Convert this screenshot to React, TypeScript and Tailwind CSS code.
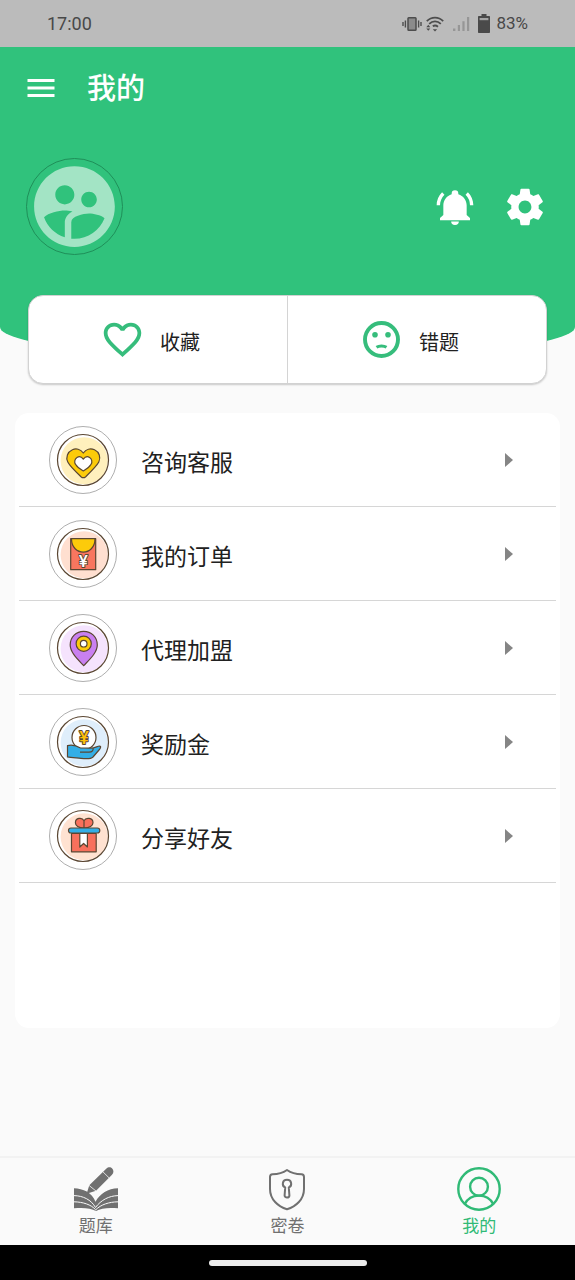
import type { ReactNode } from "react";
import { MdFavoriteBorder, MdMenu, MdSupervisedUserCircle } from "react-icons/md";

const OUTLINE = "#5a4632";

function StatusBar() {
  return (
    <div className="flex h-[47px] items-center justify-between bg-[#bbbbbb] px-[47px] font-['Roboto',sans-serif] text-[#484848]">
      <span className="text-lg">17:00</span>
      <div className="flex items-center text-[17px]">
        <svg viewBox="0 0 20 16" className="h-4 w-5" fill="none" stroke="#4d4d4d" aria-hidden="true">
          <rect x="6" y="1.7" width="8" height="12.6" rx="0.8" fill="#8b8b8b" strokeWidth="1.5" />
          <path d="M3.4 4.5v7M16.6 4.5v7" strokeWidth="1.4" />
          <path d="M1 6v4M19 6v4" strokeWidth="1.4" />
        </svg>
        <svg viewBox="0 0 18 16" className="ml-1 h-4 w-[18px]" fill="none" stroke="#4d4d4d" strokeWidth="1.8" aria-hidden="true">
          <path d="M0.8 5.2C5.5 0.4 12.5 0.4 17.2 5.2" />
          <path d="M3.2 7.9C6.6 4.6 11.4 4.6 14.8 7.9" />
          <path d="M6.8 10.2C8.3 9.2 10.3 9.3 12 10.7" />
          <path d="M9 15.6l-2.2-2.4h4.4z" fill="#4d4d4d" stroke="none" />
          <path d="M2.3 8.8l2 2.4h-4zM2.3 14.8l2-2.4h-4z" fill="#4d4d4d" stroke="none" />
        </svg>
        <svg viewBox="0 0 17 16" className="ml-[9px] h-4 w-[17px]" fill="#969696" aria-hidden="true">
          <path d="M0 12.5h2.4V15H0zM4.8 9h2.2v6H4.8zM9.4 5.2h2.2V15H9.4zM14 1h2.2v14H14z" />
        </svg>
        <svg viewBox="0 0 12 19" className="ml-[8px] h-[19px] w-3" fill="#4a4a4a" aria-hidden="true">
          <path d="M3.5 0h5v2H11c.6 0 1 .4 1 1v15c0 .6-.4 1-1 1H1c-.6 0-1-.4-1-1V3c0-.6.4-1 1-1h2.5z" />
          <path d="M1.6 4h8.8v2.2H1.6z" fill="#a5a5a5" />
        </svg>
        <span className="ml-[6px]">83%</span>
      </div>
    </div>
  );
}

function BellIcon() {
  return (
    <svg viewBox="0 0 24 24" className="size-10" fill="currentColor" aria-hidden="true">
      <path d="M21 18.6v1.400H3v-1.400l2-1.800V11c0-3.100 2.030-5.830 5-6.710V4a2 2 0 0 1 4 0v.29c2.970.88 5 3.610 5 6.710v5.800zM14.300 20.700a2.300 2.100 0 0 1-4.600 0zM19.750 3.190l-1.420 1.420A8.980 8.980 0 0 1 21 11h2c0-2.930-1.160-5.750-3.250-7.810M1 11h2c0-2.400.96-4.700 2.670-6.390L4.250 3.190A10.960 10.960 0 0 0 1 11z" />
    </svg>
  );
}

function GearIcon() {
  return (
    <svg viewBox="0 0 24 24" className="size-11" fill="currentColor" aria-hidden="true">
      <path d="M19.43 12.98c.04-.32.07-.64.07-.98s-.03-.66-.07-.98l2.11-1.65c.19-.15.24-.42.12-.64l-2-3.46c-.12-.22-.39-.3-.61-.22l-2.49 1c-.52-.4-1.08-.73-1.69-.98l-.38-2.65C14.46 2.18 14.25 2 14 2h-4c-.25 0-.46.18-.49.42l-.38 2.65c-.61.25-1.17.59-1.69.98l-2.49-1c-.23-.09-.49 0-.61.22l-2 3.46c-.13.22-.07.49.12.64l2.11 1.65c-.04.32-.07.65-.07.98s.03.66.07.98l-2.11 1.65c-.19.15-.24.42-.12.64l2 3.46c.12.22.39.3.61.22l2.49-1c.52.4 1.08.73 1.69.98l.38 2.65c.03.24.24.42.49.42h4c.25 0 .46-.18.49-.42l.38-2.65c.61-.25 1.17-.59 1.69-.98l2.49 1c.23.09.49 0 .61-.22l2-3.46c.12-.22.07-.49-.12-.64l-2.11-1.65zM12 15.5c-1.93 0-3.5-1.57-3.5-3.5s1.57-3.5 3.5-3.5 3.5 1.57 3.5 3.5-1.57 3.5-3.5 3.5z" />
    </svg>
  );
}

function FaceIcon() {
  return (
    <svg viewBox="0 0 45 45" className="size-[45px]" fill="none" stroke="currentColor" aria-hidden="true">
      <circle cx="22.5" cy="22.5" r="16.5" strokeWidth="3.9" />
      <circle cx="16" cy="17.8" r="2.8" fill="currentColor" stroke="none" />
      <circle cx="29" cy="17.8" r="2.8" fill="currentColor" stroke="none" />
      <path d="M17.5 30.200C20 28.500 25 28.500 27.500 30.200" strokeWidth="3" />
    </svg>
  );
}

function Badge({ tint, children }: { tint: string; children: ReactNode }) {
  return (
    <svg viewBox="0 0 68 68" className="size-[68px] shrink-0" fill="none" aria-hidden="true">
      <circle cx="34" cy="34" r="33.5" stroke="#777" strokeWidth="0.6" fill="#fff" />
      <circle cx="35.2" cy="34.8" r="23.6" fill={tint} />
      <circle cx="34" cy="34" r="25.5" stroke={OUTLINE} strokeWidth="1.2" />
      <g stroke={OUTLINE} strokeWidth="1.2" strokeLinejoin="round">
        {children}
      </g>
    </svg>
  );
}

const ITEMS: { label: string; tint: string; art: ReactNode }[] = [
  {
    label: "咨询客服",
    tint: "#fff0bd",
    art: (
      <>
        <path d="M34.3 27C31.5 23 27 22 23.4 23.8C18.5 26 16.5 31.5 18.8 36C20.5 39.5 27 46 32 50.7C33.5 52 35.2 52 36.7 50.7C41.5 46 48 39.5 49.8 36C52 31.5 50.3 26 45.5 23.8C41.5 22 37 23 34.3 27Z" fill="#fccb0a" />
        <path d="M34.3 33.2C32.7 31 30 30.3 28 31.5C25.7 32.9 25 36 26.5 38.3C27.7 40.3 31.5 43.5 34.3 45C37.1 43.5 40.9 40.3 42.1 38.3C43.5 36 42.9 32.9 40.6 31.5C38.6 30.3 35.9 31 34.3 33.2Z" fill="#fff" />
      </>
    ),
  },
  {
    label: "我的订单",
    tint: "#ffdfd0",
    art: (
      <>
        <path d="M21.700 18.700h25v31h-25z" fill="#f8765f" />
        <path d="M22.500 18.700C22.500 36.500 46 36.500 46 18.700Z" fill="#fccb0a" />
        <text x="34.300" y="46.500" textAnchor="middle" fontSize="17" fontWeight="500" fontFamily="Roboto, sans-serif" fill="#fff" strokeWidth="1.800" paintOrder="stroke">¥</text>
      </>
    ),
  },
  {
    label: "代理加盟",
    tint: "#f5e3fd",
    art: (
      <>
        <path d="M34.7 51.7C29 45.5 21.2 38.5 21.2 31C21.2 23 27.2 17.3 34.7 17.3S48.3 23 48.3 31C48.3 38.5 40.5 45.5 34.7 51.7Z" fill="#c980f0" />
        <circle cx="34.7" cy="29.7" r="7.6" fill="#fccb0a" />
        <circle cx="34.7" cy="29.7" r="3.3" fill="#fff" />
      </>
    ),
  },
  {
    label: "奖励金",
    tint: "#dfeefb",
    art: (
      <>
        <circle cx="35" cy="29.5" r="12" fill="#fff" />
        <text x="35" y="36" textAnchor="middle" fontSize="18" fontWeight="500" fontFamily="Roboto, sans-serif" fill="#fcc00a" strokeWidth="1.8" paintOrder="stroke">¥</text>
        <path d="M18.5 37.7C24 36.2 28 38 31.5 40L42 40.2C45 40.3 48 38.5 50.5 38C52.5 38 51.5 40.5 50 42L44 49C42 51 36 50.8 32 50.3C27 49.8 22 49.7 18.5 48.9Z" fill="#33aee6" />
        <path d="M31 44.2H40C43.5 44.2 44.5 42 44 40.2" />
      </>
    ),
  },
  {
    label: "分享好友",
    tint: "#ffe2d1",
    art: (
      <>
        <path d="M35 26C29.5 26 26.4 23.7 26.4 20.7C26.4 15.8 33 14.9 35 18.8C37 14.9 44 15.8 44 20.7C44 23.7 40.5 26 35 26ZM35 18.8V26" fill="#f8705c" />
        <path d="M22.5 31.5h24.7v18.3H22.5z" fill="#f8705c" />
        <path d="M30.8 31.5h7.6V45l-3.8-3.5L30.8 45z" fill="#fff" />
        <rect x="19.5" y="26" width="31.3" height="5" rx="2.5" fill="#33aee6" />
      </>
    ),
  },
];

function BookIcon() {
  return (
    <svg viewBox="0 0 44 44" className="size-11" fill="currentColor" aria-hidden="true">
      <path d="M0 21.3C9 21.5 18 25.5 21.5 34.8C26 26.5 34 21.5 44 21.3V41.3C35 40.5 27 41 22 44C17 41 9 40.5 0 41.3Z" />
      <path d="M0 28.6C9 28.8 17 32.5 21.5 40.5C27 33 35 28.8 44 28.6M0 34.8C9 35 17 37.5 21.7 42.8C27 37.5 35 35 44 34.8" fill="none" stroke="#fafafa" strokeWidth="1" />
      <path d="M12.6 26.800L15.300 18.300L32.200 1.700C34.500-.5 36.800-.1 38.200 1.500C39.900 3.300 39.800 5.800 38 7.800L22 23.800Z" />
      <path d="M28.800 4.700L35 10.800M15 18.400L22.200 24.200" stroke="#fafafa" strokeWidth="0.800" />
    </svg>
  );
}

function ShieldIcon() {
  return (
    <svg viewBox="0 0 44 44" className="size-11" fill="none" stroke="currentColor" strokeWidth="2" strokeLinejoin="round" aria-hidden="true">
      <path d="M22 3C18 5.8 12 7.2 7.5 7.3C5.7 7.4 5 8.2 5 10V22C5 32.5 13 39.5 22 42.3C31 39.5 39 32.5 39 22V10C39 8.200 38.300 7.400 36.500 7.300C32 7.200 26 5.800 22 3Z" />
      <path d="M20.200 20.500C16.600 19 17 12.800 22 12.800S27.400 19 23.800 20.500L24.400 28.500C24.400 31.300 19.600 31.300 19.600 28.500Z" />
    </svg>
  );
}

function UserIcon() {
  return (
    <svg viewBox="0 0 44 44" className="size-11" fill="none" stroke="currentColor" strokeWidth="2.4" aria-hidden="true">
      <circle cx="22" cy="22" r="20.7" />
      <circle cx="22" cy="19.7" r="8.9" />
      <path d="M7.8 37C10.5 31.7 15.5 28.6 22 28.6S33.5 31.7 36.2 37" />
    </svg>
  );
}

const TABS = [
  { label: "题库", icon: <BookIcon />, active: false },
  { label: "密卷", icon: <ShieldIcon />, active: false },
  { label: "我的", icon: <UserIcon />, active: true },
];

export default function App() {
  return (
    <div className="flex min-h-screen flex-col bg-[#fafafa] font-['Noto_Sans_CJK_SC',sans-serif] text-[#212121]">
      <StatusBar />

      <header className="rounded-b-[50%_32px] bg-[#30c27c] pb-[104px] text-white">
        <div className="flex h-[82px] items-center gap-7 px-[23px]">
          <button type="button" aria-label="菜单">
            <MdMenu className="size-9" />
          </button>
          <h1 className="pb-1 text-[29px] leading-none font-medium">我的</h1>
        </div>
        <div className="mt-[29px] flex items-center justify-between pr-7 pl-[26px]">
          <button type="button" aria-label="头像" className="size-[97px] rounded-full border border-[#1f8f59]">
            <MdSupervisedUserCircle className="size-full scale-102 text-[#a3e4c5]" />
          </button>
          <div className="flex items-center gap-7">
            <button type="button" aria-label="通知">
              <BellIcon />
            </button>
            <button type="button" aria-label="设置">
              <GearIcon />
            </button>
          </div>
        </div>
      </header>

      <main>
        <section className="relative mx-7 -mt-16 flex h-[89px] divide-x divide-[#d4d4d4] rounded-[15px] border border-[#d2d2d2] bg-white shadow-[0_1px_2px_rgba(0,0,0,0.2)]">
          <button type="button" className="flex flex-1 items-center justify-center gap-[15px] pr-4 text-xl">
            <MdFavoriteBorder className="size-[45px] text-[#36bd7c]" />
            <span className="pt-1">收藏</span>
          </button>
          <button type="button" className="flex flex-1 items-center justify-center gap-[15px] pr-4 text-xl">
            <span className="text-[#36bd7c]">
              <FaceIcon />
            </span>
            <span className="pt-1">错题</span>
          </button>
        </section>

        <ul className="mx-[15px] mt-[29px] rounded-[14px] bg-white px-1 pb-[145px]">
          {ITEMS.map((item) => (
            <li key={item.label} className="border-b border-[#d6d6d6]">
              <button type="button" className="flex h-[93px] w-full items-center gap-6 pr-[43px] pl-[30px] text-left">
                <Badge tint={item.tint}>{item.art}</Badge>
                <span className="flex-1 pt-1 text-[23px]">{item.label}</span>
                <svg viewBox="0 0 8 14" className="h-[14px] w-2" fill="#858585" aria-hidden="true">
                  <path d="M0 0L8 7L0 14Z" />
                </svg>
              </button>
            </li>
          ))}
        </ul>
      </main>

      <nav className="mt-auto grid grid-cols-3 border-t-2 border-[#f2f2f2]">
        {TABS.map((tab) => (
          <a
            key={tab.label}
            href="#"
            aria-current={tab.active ? "page" : undefined}
            className={`flex h-[87px] flex-col items-center pt-[9px] text-[17px] leading-[27px] ${tab.active ? "text-[#30ba76]" : "text-[#707070]"}`}
          >
            {tab.icon}
            {tab.label}
          </a>
        ))}
      </nav>
      <div className="flex h-[35px] items-center justify-center bg-black">
        <div className="h-[6px] w-[158px] rounded-full bg-[#ececec]" />
      </div>
    </div>
  );
}
